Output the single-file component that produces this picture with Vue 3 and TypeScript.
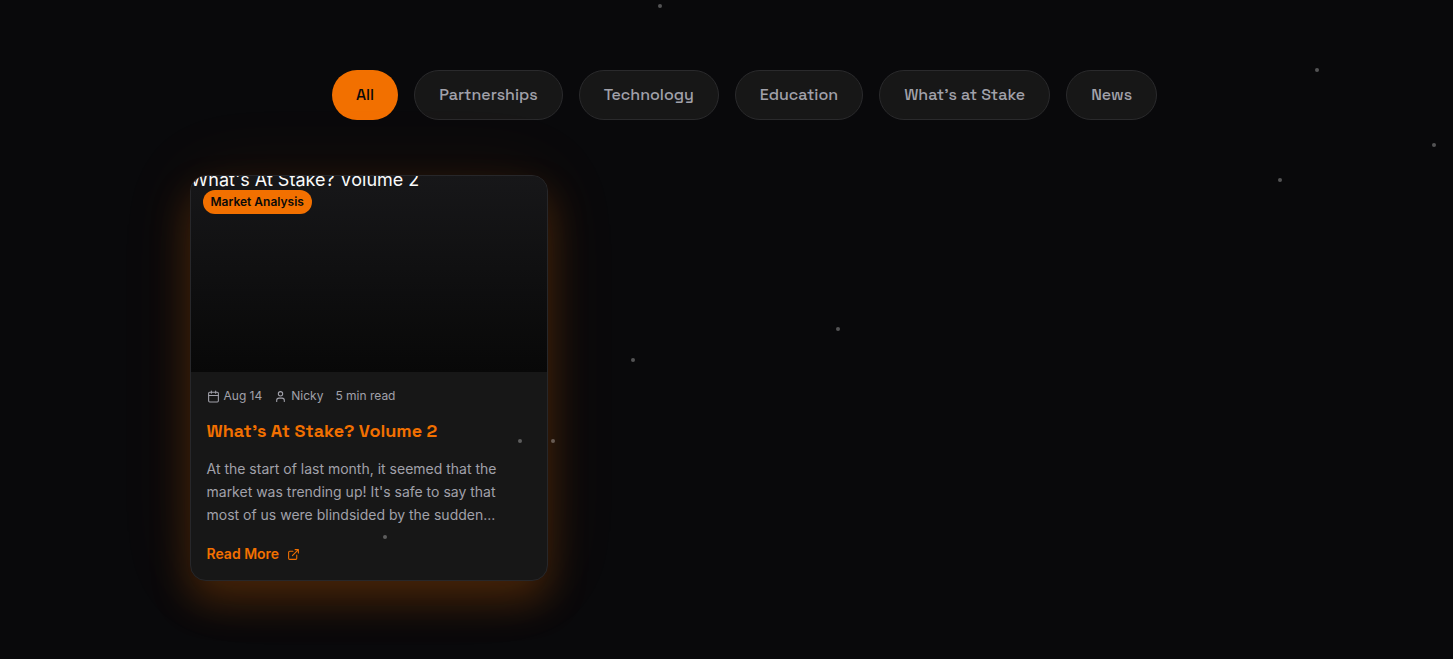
<script setup lang="ts">
import { ref } from 'vue'

interface Star {
  x: number
  y: number
}

const categories: string[] = ['All', 'Partnerships', 'Technology', 'Education', 'What’s at Stake', 'News']
const active = ref('All')

const stars: Star[] = [
  { x: 660, y: 6 },
  { x: 1317, y: 70 },
  { x: 1434, y: 145 },
  { x: 1280, y: 180 },
  { x: 838, y: 329 },
  { x: 633, y: 360 },
  { x: 520, y: 441 },
  { x: 553, y: 441 },
  { x: 385, y: 537 },
]
</script>

<template>
  <main class="page">
    <div class="container">
      <nav class="filters" aria-label="Categories">
        <button
          v-for="name in categories"
          :key="name"
          type="button"
          class="filter"
          :class="{ active: active === name }"
          :aria-pressed="active === name"
          @click="active = name"
        >
          {{ name }}
        </button>
      </nav>

      <section class="grid">
        <article class="card">
          <div class="cover">
            <span class="cover-title">What's At Stake? Volume 2</span>
            <span class="badge">Market Analysis</span>
          </div>
          <div class="body">
            <div class="meta">
              <span class="meta-item">
                <svg class="icon" viewBox="0 0 24 24" aria-hidden="true">
                  <path d="M8 2v4M16 2v4M3 10h18" />
                  <rect x="3" y="4" width="18" height="18" rx="2" />
                </svg>
                Aug 14
              </span>
              <span class="meta-item">
                <svg class="icon" viewBox="0 0 24 24" aria-hidden="true">
                  <path d="M19 21v-2a4 4 0 0 0-4-4H9a4 4 0 0 0-4 4v2" />
                  <circle cx="12" cy="7" r="4" />
                </svg>
                Nicky
              </span>
              <span class="meta-item">5 min read</span>
            </div>
            <h3 class="title">What’s At Stake? Volume 2</h3>
            <p class="excerpt">
              At the start of last month, it seemed that the market was trending up! It's safe to say that most of us
              were blindsided by the sudden...
            </p>
            <a class="more" href="#">
              Read More
              <svg class="icon" viewBox="0 0 24 24" aria-hidden="true">
                <path d="M15 3h6v6M10 14 21 3M18 13v6a2 2 0 0 1-2 2H5a2 2 0 0 1-2-2V8a2 2 0 0 1 2-2h6" />
              </svg>
            </a>
          </div>
        </article>
      </section>
    </div>

    <div class="sky" aria-hidden="true">
      <i v-for="(s, i) in stars" :key="i" class="star" :style="{ left: s.x + 'px', top: s.y + 'px' }"></i>
    </div>
  </main>
</template>

<style>
body {
  margin: 0;
  background: #09090b;
}
</style>

<style scoped>
.page {
  position: relative;
  box-sizing: border-box;
  min-height: 100vh;
  padding: 70px 0 78px 36px;
  overflow: hidden;
  background: #09090b;
  color: #fafafa;
  font-family: Inter, 'Liberation Sans', sans-serif;
}

.container {
  max-width: 1110px;
  margin: 0 auto;
}

.filters {
  display: flex;
  flex-wrap: wrap;
  justify-content: center;
  gap: 16px;
  margin-bottom: 55px;
}

.filter {
  height: 50px;
  padding: 0 24px;
  border: 1px solid #2a2a2c;
  border-radius: 25px;
  background: #171717;
  color: #a1a1aa;
  font: 500 16px/24px 'Space Grotesk', Inter, sans-serif;
  cursor: pointer;
}

.filter.active {
  border: 0;
  background: #f27000;
  color: #0a0a0a;
}

.grid {
  display: grid;
  grid-template-columns: repeat(3, 1fr);
  gap: 18px;
}

.card {
  overflow: hidden;
  border: 1px solid #27272a;
  border-radius: 16px;
  background: #171717;
  box-shadow: 0 20px 40px rgba(242, 112, 0, 0.24), 0 0 80px rgba(242, 112, 0, 0.08);
}

.cover {
  display: flex;
  flex-direction: column;
  align-items: flex-start;
  height: 196px;
  background: linear-gradient(#171719, #080808);
}

.cover-title {
  margin-top: -7px;
  font-size: 18px;
  font-weight: 400;
  line-height: 21px;
  white-space: nowrap;
}

.badge {
  margin-left: 12px;
  padding: 0 8px;
  border-radius: 12px;
  background: #f27000;
  color: #0a0a0a;
  font-size: 12px;
  font-weight: 600;
  line-height: 24px;
}

.body {
  padding: 16px;
}

.meta {
  display: flex;
  gap: 12px;
  color: #a1a1aa;
  font-size: 12px;
  line-height: 16px;
}

.meta-item {
  display: flex;
  align-items: center;
  gap: 4px;
}

.icon {
  width: 13px;
  height: 13px;
  fill: none;
  stroke: currentColor;
  stroke-width: 2;
  stroke-linecap: round;
  stroke-linejoin: round;
}

.title {
  margin: 12px 0;
  color: #f27000;
  font: 700 18px/29px 'Space Grotesk', Inter, sans-serif;
}

.excerpt {
  margin: 0 0 18px;
  padding-right: 16px;
  color: #a1a1aa;
  font-size: 14px;
  line-height: 23px;
}

.more {
  display: flex;
  align-items: center;
  width: fit-content;
  gap: 8px;
  color: #f27000;
  font-size: 14px;
  font-weight: 600;
  line-height: 20px;
  text-decoration: none;
}

.sky {
  position: absolute;
  inset: 0;
  pointer-events: none;
}

.star {
  position: absolute;
  width: 4px;
  height: 4px;
  margin: -2px 0 0 -2px;
  border-radius: 50%;
  background: rgba(255, 255, 255, 0.3);
}
</style>
